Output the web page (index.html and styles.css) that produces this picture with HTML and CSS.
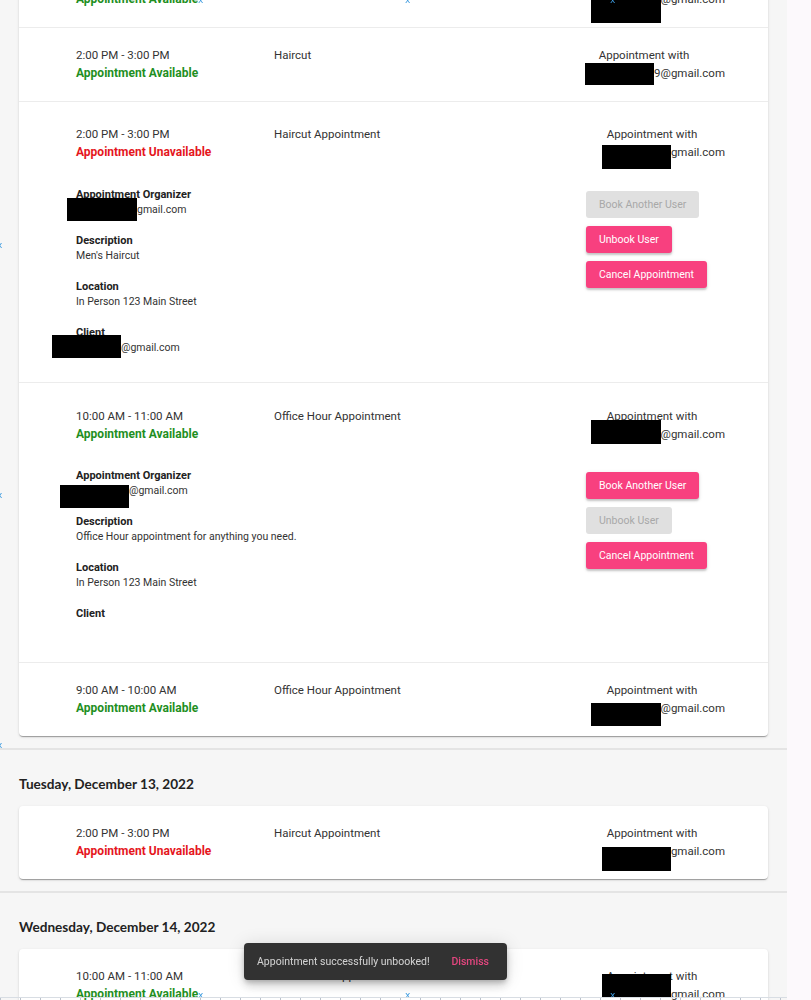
FILE: index.html
```html
<!DOCTYPE html>
<html>
<head>
<meta charset="utf-8">
<title>Appointments</title>
<link rel="stylesheet" href="styles.css">
</head>
<body>
<div class="page">
  <section class="day">
    <div class="card">
      <div class="row">
        <div class="head">
          <div class="when"><div class="time">10:00 AM - 11:00 AM</div><div class="status ok">Appointment Available</div></div>
          <div class="title">Office Hour Appointment</div>
          <div class="with"><div class="with-label">Appointment with</div><div class="with-mail"><span class="redact r0"></span>@gmail.com</div></div>
        </div>
      </div>
      <div class="row">
        <div class="head">
          <div class="when"><div class="time">2:00 PM - 3:00 PM</div><div class="status ok">Appointment Available</div></div>
          <div class="title">Haircut</div>
          <div class="with wide"><div class="with-label">Appointment with</div><div class="with-mail"><span class="redact r1"></span>9@gmail.com</div></div>
        </div>
      </div>
      <div class="row open">
        <div class="head">
          <div class="when"><div class="time">2:00 PM - 3:00 PM</div><div class="status bad">Appointment Unavailable</div></div>
          <div class="title">Haircut Appointment</div>
          <div class="with"><div class="with-label">Appointment with</div><div class="with-mail"><span class="redact r2"></span>gmail.com</div></div>
        </div>
        <div class="body">
          <div class="details">
            <div class="field"><div class="field-label">Appointment Organizer</div><div class="field-value"><span class="redact r3"></span>gmail.com</div></div>
            <div class="field"><div class="field-label">Description</div><div class="field-value">Men's Haircut</div></div>
            <div class="field"><div class="field-label">Location</div><div class="field-value">In Person 123 Main Street</div></div>
            <div class="field"><div class="field-label">Client</div><div class="field-value"><span class="redact r4"></span>@gmail.com</div></div>
          </div>
          <div class="actions">
            <button class="btn" disabled>Book Another User</button>
            <button class="btn">Unbook User</button>
            <button class="btn">Cancel Appointment</button>
          </div>
        </div>
      </div>
      <div class="row open">
        <div class="head">
          <div class="when"><div class="time">10:00 AM - 11:00 AM</div><div class="status ok">Appointment Available</div></div>
          <div class="title">Office Hour Appointment</div>
          <div class="with"><div class="with-label">Appointment with</div><div class="with-mail"><span class="redact r5"></span>@gmail.com</div></div>
        </div>
        <div class="body">
          <div class="details">
            <div class="field"><div class="field-label">Appointment Organizer</div><div class="field-value"><span class="redact r6"></span>@gmail.com</div></div>
            <div class="field"><div class="field-label">Description</div><div class="field-value">Office Hour appointment for anything you need.</div></div>
            <div class="field"><div class="field-label">Location</div><div class="field-value">In Person 123 Main Street</div></div>
            <div class="field"><div class="field-label">Client</div><div class="field-value"></div></div>
          </div>
          <div class="actions">
            <button class="btn">Book Another User</button>
            <button class="btn" disabled>Unbook User</button>
            <button class="btn">Cancel Appointment</button>
          </div>
        </div>
      </div>
      <div class="row">
        <div class="head">
          <div class="when"><div class="time">9:00 AM - 10:00 AM</div><div class="status ok">Appointment Available</div></div>
          <div class="title">Office Hour Appointment</div>
          <div class="with"><div class="with-label">Appointment with</div><div class="with-mail"><span class="redact r7"></span>@gmail.com</div></div>
        </div>
      </div>
    </div>
  </section>
  <div class="divider"></div>

  <section class="day">
    <h2 class="day-title">Tuesday, December 13, 2022</h2>
    <div class="card">
      <div class="row">
        <div class="head">
          <div class="when"><div class="time">2:00 PM - 3:00 PM</div><div class="status bad">Appointment Unavailable</div></div>
          <div class="title">Haircut Appointment</div>
          <div class="with"><div class="with-label">Appointment with</div><div class="with-mail"><span class="redact r8"></span>gmail.com</div></div>
        </div>
      </div>
    </div>
  </section>
  <div class="divider"></div>

  <section class="day">
    <h2 class="day-title">Wednesday, December 14, 2022</h2>
    <div class="card">
      <div class="row">
        <div class="head">
          <div class="when"><div class="time">10:00 AM - 11:00 AM</div><div class="status ok">Appointment Available</div></div>
          <div class="title">Office Hour Appointment</div>
          <div class="with"><div class="with-label">Appointment with</div><div class="with-mail"><span class="redact r9"></span>gmail.com</div></div>
        </div>
      </div>
    </div>
  </section>
</div>

<div class="snackbar">
  <span class="snack-text">Appointment successfully unbooked!</span>
  <span class="snack-action">Dismiss</span>
</div>

<span class="mark m-t1">x</span>
<span class="mark m-t2">x</span>
<span class="mark m-t3">x</span>
<span class="mark m-l1">x</span>
<span class="mark m-l2">x</span>
<span class="mark m-l3">x</span>
<span class="mark m-b1">x</span>
<span class="mark m-b2">x</span>
<span class="mark m-b3">x</span>
<div class="ruler"></div>
</body>
</html>
```

FILE: styles.css
```css
html, body {
  margin: 0;
  padding: 0;
}
body {
  background: #fcf9fc;
  font-family: Roboto, "Liberation Sans", Arial, sans-serif;
  color: #333;
  overflow: hidden;
}
.page {
  width: 787px;
  background: #f6f6f6;
  margin-top: -46px;
  padding-bottom: 200px;
}
.card {
  margin: 0 19px;
  background: #fff;
  border-radius: 4px;
  box-shadow: 0 2px 1px -1px rgba(0,0,0,.2), 0 1px 1px 0 rgba(0,0,0,.14), 0 1px 3px 0 rgba(0,0,0,.12);
}
.row {
  padding: 18px 43px 19px 57px;
}
.row + .row {
  border-top: 1px solid #ececec;
}
.row.open {
  padding-top: 23px;
  padding-bottom: 27px;
}
.row.open + .row.open {
  padding-top: 24px;
  padding-bottom: 26px;
}
.head {
  display: flex;
  font-size: 11.5px;
  line-height: 18px;
}
.when {
  width: 198px;
}
.time {
  color: #333;
}
.status {
  font-weight: 700;
  font-size: 12px;
}
.status.ok { color: #1f8f1f; }
.status.bad { color: #e5161d; }
.title {
  flex: 1;
  color: #333;
}
.with {
  width: 146px;
  display: flex;
  flex-direction: column;
}
.with.wide {
  width: 162px;
}
.with-label {
  text-align: center;
}
.with-mail {
  text-align: right;
}
.redact {
  display: inline-block;
  position: relative;
  width: var(--w, 0px);
  height: 0;
}
.redact::after {
  content: "";
  position: absolute;
  right: 0;
  top: var(--t, -12px);
  width: var(--bw, 69px);
  height: var(--h, 23px);
  background: #000;
}
.r0 { --t: -3px; --bw: 70px; }
.r1 { --t: -14px; --h: 22px; }
.r2 { --t: -11px; --h: 24px; }
.r3 { --w: 61px; --bw: 70px; --t: -15px; }
.r4 { --w: 45px; --t: -16px; }
.r5 { --t: -18px; --h: 24px; --bw: 70px; }
.r6 { --w: 53px; --t: -9px; }
.r7 { --t: -9px; --bw: 70px; }
.r8 { --t: -8px; --h: 24px; }
.r9 { --t: -24px; }

.body {
  display: flex;
  margin-top: 26px;
}
.row.open + .row.open .body {
  margin-top: 25px;
}
.details {
  flex: 1;
  font-size: 10.5px;
  line-height: 15px;
}
.field + .field {
  margin-top: 16px;
}
.field-label {
  font-weight: 700;
  font-size: 11px;
  color: #222;
}
.field-value {
  min-height: 15px;
  color: #333;
}
.actions {
  width: 139px;
  display: flex;
  flex-direction: column;
  align-items: flex-start;
  gap: 8px;
  padding-top: 4px;
}
.btn {
  font-family: Roboto, "Liberation Sans", Arial, sans-serif;
  font-size: 10.5px;
  height: 27px;
  padding: 0 13px;
  border: 0;
  border-radius: 3px;
  background: #f8407f;
  color: #fff;
  box-shadow: 0 2px 2px rgba(0,0,0,.18), 0 1px 4px rgba(0,0,0,.1);
}
.btn:disabled {
  background: #e0e0e0;
  color: #a8a8a8;
  box-shadow: none;
}
.divider {
  height: 2px;
  background: #e4e4e4;
  margin-top: 12px;
}
.day-title {
  font-family: Lato, "Liberation Sans", sans-serif;
  font-weight: 700;
  font-size: 13.6px;
  line-height: 20px;
  margin: 24px 19px 12px;
  color: #222;
}
.snackbar {
  position: fixed;
  left: 244px;
  top: 943px;
  width: 263px;
  height: 37px;
  box-sizing: border-box;
  padding: 0 13px;
  display: flex;
  align-items: center;
  justify-content: space-between;
  background: #323232;
  border-radius: 4px;
  box-shadow: 0 3px 5px -1px rgba(0,0,0,.2), 0 6px 10px 0 rgba(0,0,0,.14), 0 1px 18px 0 rgba(0,0,0,.12);
  font-size: 10.5px;
}
.snack-text {
  color: rgba(255,255,255,.78);
}
.snack-action {
  color: #e4467f;
  font-weight: 500;
  margin-right: 5px;
}
.mark {
  position: fixed;
  font-family: "DejaVu Sans", sans-serif;
  font-size: 9px;
  line-height: 10px;
  color: #3d9be0;
}
.m-t1 { left: 198px; top: -5px; }
.m-t2 { left: 405px; top: -5px; }
.m-t3 { left: 610px; top: -5px; }
.m-l1 { left: -3px; top: 240px; }
.m-l2 { left: -3px; top: 490px; }
.m-l3 { left: -3px; top: 740px; }
.m-b1 { left: 198px; top: 990px; }
.m-b2 { left: 405px; top: 990px; }
.m-b3 { left: 610px; top: 990px; }
.ruler {
  position: fixed;
  left: 0;
  top: 997px;
  width: 787px;
  height: 3px;
  background: repeating-linear-gradient(90deg, #bcc3cc 0 1px, transparent 1px 20px);
  border-top: 1px solid #d8dde3;
}
```
